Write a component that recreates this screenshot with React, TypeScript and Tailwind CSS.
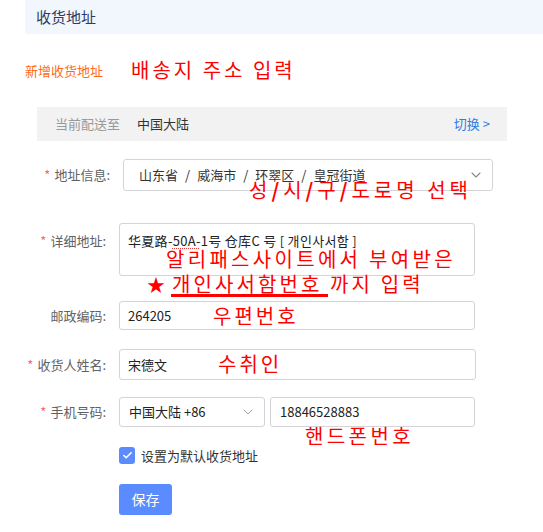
import React from "react";
import { ChevronDown, Check } from "lucide-react";

const cjk = "font-['Noto_Sans_CJK_SC','Noto_Sans',sans-serif]";
const kr = "font-['Noto_Sans_CJK_KR','Noto_Sans',sans-serif]";

function Label({ text, star = true, w = 106 }: { text: string; star?: boolean; w?: number }) {
  return (
    <div
      className="flex items-center justify-end gap-[4px] text-[13px] text-[#606266] shrink-0"
      style={{ width: w }}
    >
      {star && <span className="text-[#f56c6c] text-[13px]">*</span>}
      <span>{text}</span>
    </div>
  );
}

function Sep() {
  return <span className="mx-[7px]">/</span>;
}

export default function App() {
  return (
    <div className={`relative w-[543px] h-[532px] bg-white overflow-hidden ${cjk}`}>
      {/* header */}
      <div className="ml-[25px] h-[34px] bg-[#f2f7fd] flex items-center pl-[11px] text-[15px] text-[#2d3b64]">
        收货地址
      </div>
      <div className="h-[73px] flex items-center pl-[25px] text-[13px] text-[#ff6a1a]">新增收货地址</div>

      {/* delivery bar */}
      <div className="ml-[37px] w-[470px] h-[34px] bg-[#f2f2f2] flex items-center pl-[18px] pr-[17px] text-[13px]">
        <span className="text-[#999999]">当前配送至</span>
        <span className="ml-[17px] text-[#333333]">中国大陆</span>
        <span className="ml-auto text-[#2d7be5]">切换 &gt;</span>
      </div>

      {/* row 1 */}
      <div className="mt-[18px] flex items-center">
        <Label text="地址信息:" w={110} />
        <div className="ml-[13px] w-[370px] h-[32px] border border-[#d4d4d8] rounded-[3px] flex items-center pl-[15px] pr-[8px] text-[13px] text-[#333]">
          <span>
            山东省<Sep />威海市<Sep />环翠区<Sep />皇冠街道
          </span>
          <ChevronDown className="ml-auto text-[#888]" size={16} strokeWidth={1.6} />
        </div>
      </div>

      {/* row 2 */}
      <div className="mt-[32px] flex items-start">
        <div className="pt-[8px]">
          <Label text="详细地址:" />
        </div>
        <div className="ml-[13px] w-[356px] h-[53px] border border-[#d4d4d8] rounded-[3px] pl-[8px] pt-[7px] text-[13px] tracking-[0.3px] text-[#222]">
          华夏路-<span className="underline decoration-dotted decoration-[#e53935] decoration-1 underline-offset-2">50A-</span>1号 仓库C 号 [ 개인사서함 ]
        </div>
      </div>

      {/* row 3 */}
      <div className="mt-[25px] flex items-center">
        <Label text="邮政编码:" star={false} />
        <div className="ml-[13px] w-[356px] h-[29px] border border-[#d4d4d8] rounded-[3px] flex items-center pl-[8px] text-[13px] text-[#222]">
          264205
        </div>
      </div>

      {/* row 4 */}
      <div className="mt-[19px] flex items-center">
        <Label text="收货人姓名:" />
        <div className="ml-[13px] w-[357px] h-[31px] border border-[#d4d4d8] rounded-[3px] flex items-center pl-[8px] text-[13px] text-[#222]">
          宋德文
        </div>
      </div>

      {/* row 5 */}
      <div className="mt-[17px] flex items-center">
        <Label text="手机号码:" />
        <div className="ml-[13px] w-[146px] h-[30px] border border-[#d4d4d8] rounded-[3px] flex items-center pl-[9px] pr-[8px] text-[13px] text-[#222]">
          <span>中国大陆 +86</span>
          <ChevronDown className="ml-auto text-[#999]" size={16} strokeWidth={1.4} />
        </div>
        <div className="ml-[5px] w-[205px] h-[30px] border border-[#d4d4d8] rounded-[3px] flex items-center pl-[9px] text-[13px] text-[#222]">
          18846528883
        </div>
      </div>

      {/* row 6 */}
      <div className="mt-[19px] flex items-center pl-[119px]">
        <div className="w-[16px] h-[17px] rounded-[3px] bg-[#5b8cff] flex items-center justify-center">
          <Check size={11} strokeWidth={3.5} className="text-white" />
        </div>
        <span className="ml-[6px] text-[13px] text-[#333]">设置为默认收货地址</span>
      </div>

      {/* row 7 */}
      <div className="mt-[18px] pl-[119px]">
        <div className="w-[53px] h-[31px] rounded-[3px] bg-[#5b8cff] flex items-center justify-center text-[14px] text-white">
          保存
        </div>
      </div>

      <div className="mt-[17px] ml-[25px] h-[10px] bg-[#eaf3fd]" />

      {/* annotations */}
      <div className={`absolute left-[131px] top-[56px] text-[20px] leading-[28px] tracking-[3px] text-[#ff0000] ${kr}`}>
        배송지 주소 입력
      </div>
      <div className={`absolute left-[249px] top-[176px] text-[20px] leading-[28px] tracking-[4px] text-[#ff0000] ${kr}`}>
        성<b>/</b>시<b>/</b>구<b>/</b>도로명 선택
      </div>
      <div className={`absolute left-[166px] top-[245px] text-[20px] leading-[28px] tracking-[3.3px] text-[#ff0000] ${kr}`}>
        알리패스사이트에서 부여받은
      </div>
      <div className="absolute left-[147px] top-[272px] text-[18px] leading-[24px] text-[#ff0000]">★</div>
      <div className={`absolute left-[172px] top-[270px] text-[20px] leading-[28px] tracking-[3.1px] text-[#ff0000] ${kr}`}>
        개인사서함번호 까지 입력
      </div>
      <div className="absolute left-[171px] top-[294px] w-[157px] h-[3px] bg-[#ff0000]" />
      <div className={`absolute left-[213px] top-[302px] text-[20px] leading-[28px] tracking-[3px] text-[#ff0000] ${kr}`}>
        우편번호
      </div>
      <div className={`absolute left-[218px] top-[350px] text-[20px] leading-[28px] tracking-[3px] text-[#ff0000] ${kr}`}>
        수취인
      </div>
      <div className={`absolute left-[305px] top-[422px] text-[20px] leading-[28px] tracking-[3.4px] text-[#ff0000] ${kr}`}>
        핸드폰번호
      </div>
    </div>
  );
}
